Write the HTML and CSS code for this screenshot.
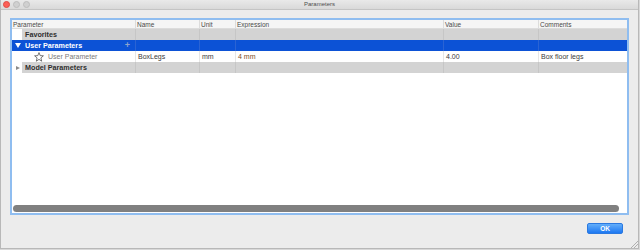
FILE: index.html
```html
<!DOCTYPE html>
<html>
<head>
<meta charset="utf-8">
<link rel="stylesheet" href="styles.css">
</head>
<body>
<div class="window">
  <div class="titlebar">
    <div class="lights">
      <span class="light red"></span>
      <span class="light"></span>
      <span class="light"></span>
    </div>
    <div class="title">Parameters</div>
    <div></div>
  </div>
  <div class="content">
    <div class="frame">
      <div class="table">
        <div class="row head">
          <div class="cell">Parameter</div>
          <div class="cell">Name</div>
          <div class="cell">Unit</div>
          <div class="cell">Expression</div>
          <div class="cell">Value</div>
          <div class="cell">Comments</div>
        </div>
        <div class="row group">
          <div class="cell first"><span class="indent"></span><span class="gtext">Favorites</span></div>
          <div class="cell"></div>
          <div class="cell"></div>
          <div class="cell"></div>
          <div class="cell"></div>
          <div class="cell"></div>
        </div>
        <div class="row selected">
          <div class="cell first"><span class="indent"><span class="tri-down"></span></span><span class="gtext">User Parameters</span><span class="plus">+</span></div>
          <div class="cell"></div>
          <div class="cell"></div>
          <div class="cell"></div>
          <div class="cell"></div>
          <div class="cell"></div>
        </div>
        <div class="row item">
          <div class="cell first">
            <svg class="star" width="10" height="10" viewBox="0 0 10 10"><polygon points="5,0.6 6.2,3.6 9.4,3.8 6.9,5.9 7.7,9.2 5,7.4 2.3,9.2 3.1,5.9 0.6,3.8 3.8,3.6" fill="none" stroke="#555" stroke-width="0.8" stroke-linejoin="round"/></svg>
            <span class="ptext">User Parameter</span>
          </div>
          <div class="cell">BoxLegs</div>
          <div class="cell">mm</div>
          <div class="cell expr">4 mm</div>
          <div class="cell">4.00</div>
          <div class="cell">Box floor legs</div>
        </div>
        <div class="row group">
          <div class="cell first"><span class="indent"><span class="tri-right"></span></span><span class="gtext">Model Parameters</span></div>
          <div class="cell"></div>
          <div class="cell"></div>
          <div class="cell"></div>
          <div class="cell"></div>
          <div class="cell"></div>
        </div>
      </div>
      <div class="spacer"></div>
      <div class="scrollbar"></div>
    </div>
    <div class="buttons">
      <div class="ok">OK</div>
    </div>
  </div>
  <div class="grip"></div>
</div>
</body>
</html>
```
FILE: styles.css
```css
html, body {
  margin: 0;
  padding: 0;
}
body {
  width: 640px;
  height: 250px;
  background: #d8d8d8;
  font-family: "Liberation Sans", Arial, sans-serif;
  overflow: hidden;
}
.window {
  position: relative;
  box-sizing: border-box;
  width: 639px;
  height: 249px;
  background: #ececec;
  border: 1px solid #b8b8b8;
  border-top: none;
  display: flex;
  flex-direction: column;
}
.titlebar {
  height: 10px;
  box-sizing: border-box;
  border-bottom: 1px solid #c4c4c4;
  background: linear-gradient(#e9e9e9, #d9d9d9);
  display: grid;
  grid-template-columns: 1fr auto 1fr;
  align-items: center;
}
.lights {
  display: flex;
  gap: 3px;
  padding-left: 1.5px;
}
.light {
  width: 7px;
  height: 7px;
  border-radius: 50%;
  background: #d0d0d0;
  box-sizing: border-box;
  border: 0.5px solid #bdbdbd;
}
.light.red {
  background: #fc5f57;
  border-color: #de4a42;
}
.title {
  font-size: 6px;
  color: #4d4d4d;
  line-height: 9px;
}
.content {
  flex: 1;
  padding: 8px 9px 0 9px;
  display: flex;
  flex-direction: column;
}
.frame {
  height: 197px;
  box-sizing: border-box;
  border: 2px solid #8fbdf0;
  background: #fff;
  display: flex;
  flex-direction: column;
}
.table {
  display: flex;
  flex-direction: column;
}
.row {
  display: grid;
  grid-template-columns: 123px 64px 36px 208px 95px 1fr;
  height: 11px;
  font-size: 7px;
  line-height: 11px;
}
.cell {
  border-left: 1px solid #e4e4e4;
  padding-left: 2px;
  white-space: nowrap;
  overflow: hidden;
  color: #333;
}
.cell:first-child {
  border-left: none;
}
.row.head {
  height: 9px;
  line-height: 9px;
  font-size: 6.5px;
  background: #f5f5f5;
  border-bottom: 1px solid #dcdcdc;
  box-sizing: border-box;
  height: 9px;
}
.row.head .cell {
  color: #4a4a4a;
  border-left-color: #dcdcdc;
  padding-left: 1px;
}
.row.group .cell {
  background: #d3d3d3;
  border-left-color: #c6c6c6;
}
.row.group .cell.first {
  background: transparent;
  display: flex;
  padding-left: 0;
}
.cell.first {
  display: flex;
  align-items: center;
  padding-left: 0;
}
.indent {
  width: 10px;
  height: 11px;
  flex: none;
  display: flex;
  align-items: center;
  justify-content: center;
}
.gtext {
  font-weight: bold;
  color: #2e2e2e;
  padding-left: 3px;
  font-size: 7.2px;
}
.row.group .gtext {
  background: #d3d3d3;
  flex: 1;
  height: 11px;
}
.row.selected .cell {
  background: #0c52d6;
  border-left-color: #2a63d4;
}
.row.selected .gtext {
  color: #fff;
  flex: 1;
}
.plus {
  color: #8ea4cc;
  font-size: 9px;
  font-weight: bold;
  padding-right: 5px;
}
.tri-down {
  width: 0;
  height: 0;
  border-left: 3px solid transparent;
  border-right: 3px solid transparent;
  border-top: 5px solid #fff;
  margin-left: 2px;
}
.tri-right {
  width: 0;
  height: 0;
  border-top: 2.5px solid transparent;
  border-bottom: 2.5px solid transparent;
  border-left: 4px solid #8a8a8a;
  margin-left: 2px;
}
.star {
  margin-left: 22px;
  flex: none;
}
.ptext {
  color: #7a7a7a;
  padding-left: 4px;
}
.row.item .cell {
  color: #3a3a3a;
  border-left-color: #e6e6e6;
}
.row.item .cell.expr {
  color: #7a4d1e;
}
.spacer {
  flex: 1;
}
.scrollbar {
  height: 7px;
  margin: 0 8px 1px 1px;
  border-radius: 4px;
  background: #808080;
}
.buttons {
  display: flex;
  justify-content: flex-end;
  padding-top: 8px;
  padding-right: 6px;
}
.ok {
  width: 36px;
  height: 11px;
  box-sizing: border-box;
  border-radius: 2px;
  background: linear-gradient(#63aefa, #1d78f2);
  border: 0.5px solid #2b79e0;
  color: #fff;
  font-weight: bold;
  font-size: 6.5px;
  line-height: 10px;
  text-align: center;
}
.grip {
  position: absolute;
  right: 0;
  bottom: 0;
  width: 7px;
  height: 7px;
  background: linear-gradient(135deg, transparent 45%, #b0b0b0 45%, #b0b0b0 52%, transparent 52%, transparent 70%, #b0b0b0 70%, #b0b0b0 77%, transparent 77%);
}
```
